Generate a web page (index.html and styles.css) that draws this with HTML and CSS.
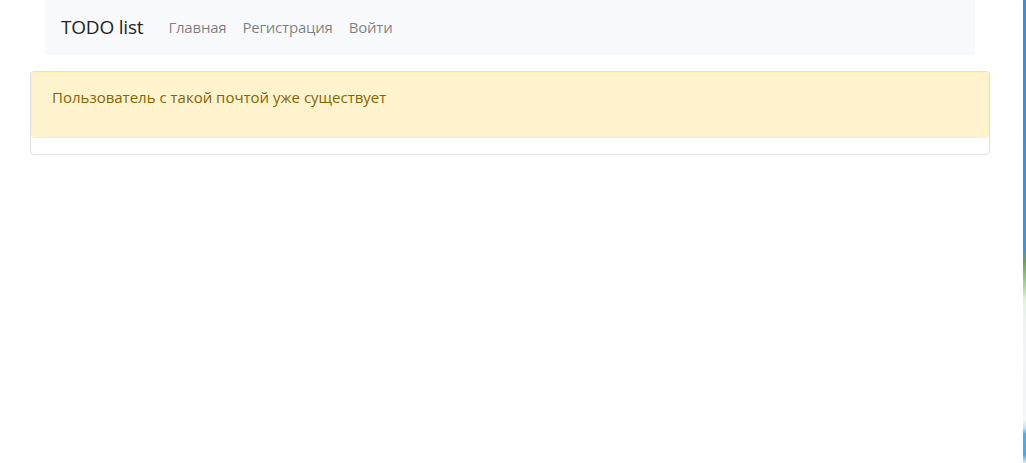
FILE: index.html
```html
<!DOCTYPE html>
<html lang="ru">
<head>
<meta charset="utf-8">
<title>TODO list</title>
<link rel="stylesheet" href="styles.css">
</head>
<body>
<div class="page">
  <nav class="navbar">
    <a class="brand" href="#">TODO list</a>
    <ul class="nav">
      <li><a href="#">Главная</a></li>
      <li><a href="#">Регистрация</a></li>
      <li><a href="#">Войти</a></li>
    </ul>
  </nav>
  <div class="card">
    <div class="alert"><p>Пользователь с такой почтой уже существует</p></div>
  </div>
</div>
<div class="edge"></div>
</body>
</html>
```
FILE: styles.css
```css
* { box-sizing: border-box; }
html, body { height: 100%; }
body {
  margin: 0;
  display: flex;
  font-family: "Open Sans", "Noto Sans", "DejaVu Sans", sans-serif;
  font-size: 15px;
  line-height: 1.5;
  color: #212529;
  background: #fff;
}
.page {
  width: 1020px;
  display: flex;
  flex-direction: column;
  align-items: center;
}
.edge {
  margin-left: 3px;
  width: 3px;
  height: 100%;
  background: linear-gradient(to bottom,
    #3d8fd8 0px, #3f93d9 250px, #6aa553 262px, #a9d68a 285px,
    #e4f2dd 300px, #eef3f2 320px, #f4f6f7 420px, #bfe3f7 428px,
    #4aaeea 434px, #45a9e6 455px, #d8eef9 463px);
}
.navbar {
  width: 930px;
  height: 55px;
  background: #f8f9fa;
  display: flex;
  align-items: center;
  padding: 0 16px;
}
.brand {
  font-size: 19px;
  color: #212529;
  text-decoration: none;
  margin-right: 17px;
  letter-spacing: -0.2px;
}
.nav {
  list-style: none;
  margin: 0;
  padding: 0;
  display: flex;
}
.nav a {
  display: block;
  padding: 8px;
  color: rgba(0,0,0,0.5);
  text-decoration: none;
  letter-spacing: -0.2px;
}
.card {
  width: 960px;
  margin-top: 16px;
  border: 1px solid rgba(0,0,0,0.125);
  border-radius: 4px;
  padding-bottom: 16px;
}
.alert {
  background: #fff3cd;
  border: 1px solid #ffeeba;
  border-radius: 4px;
  color: #856404;
  padding: 13px 20px 12px;
}
.alert p {
  margin: 0 0 16px;
}
```
